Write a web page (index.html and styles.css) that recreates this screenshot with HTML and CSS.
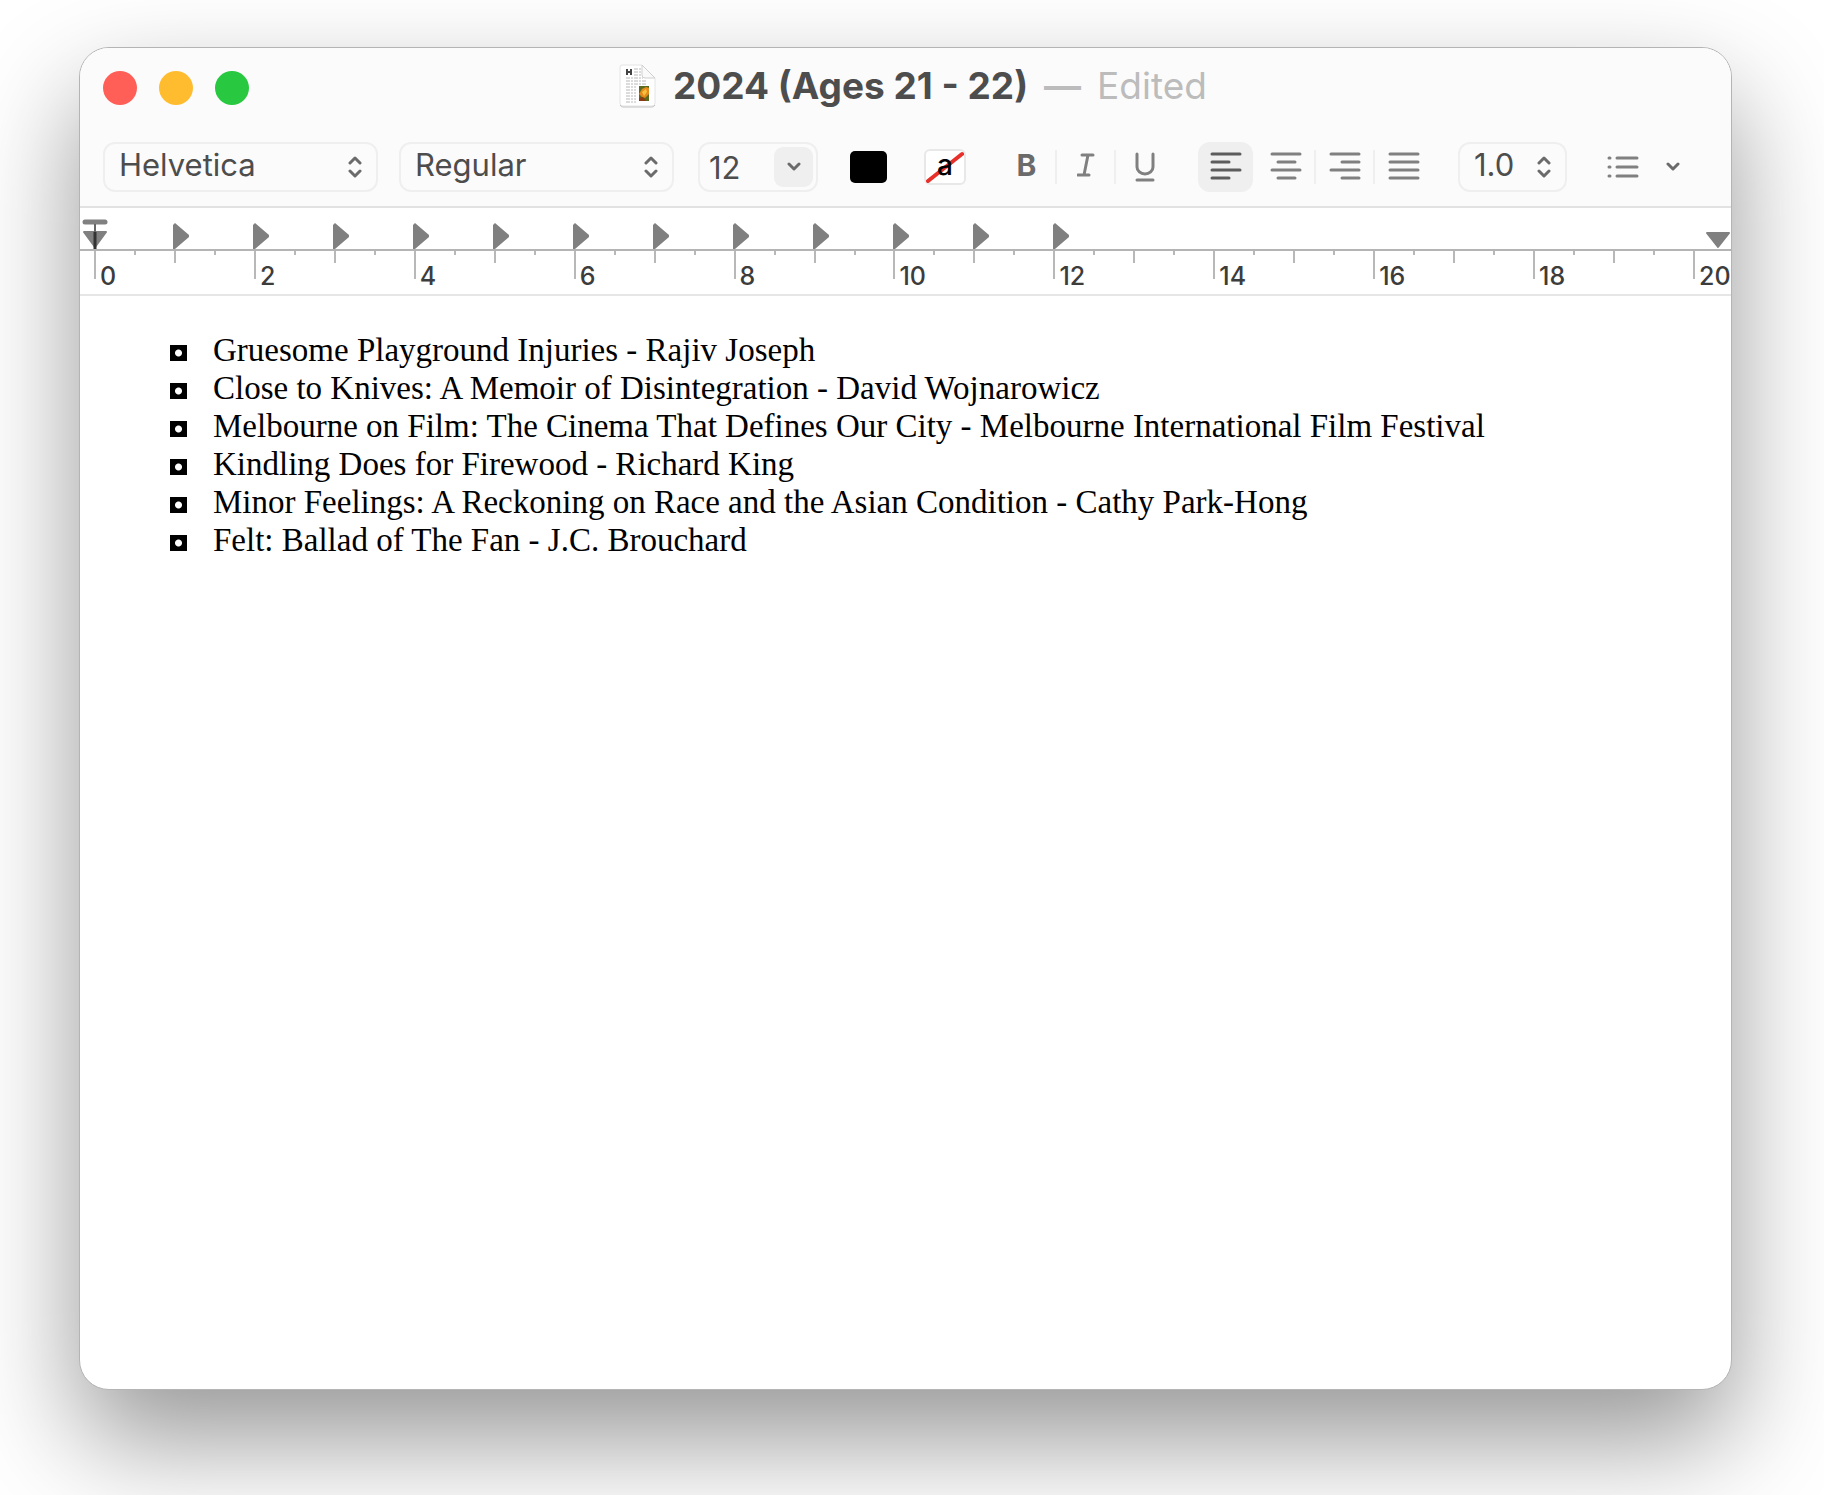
FILE: index.html
```html
<!DOCTYPE html>
<html lang="en">
<head>
    <meta charset="UTF-8">
    <meta name="viewport" content="width=device-width, initial-scale=1.0">
    <title>2024 (Ages 21 - 22)</title>
    <link rel="stylesheet" href="styles.css">
</head>
<body>
    <main class="window">
        <header class="titlebar">
            <div class="lights">
                <button type="button" class="light close" aria-label="Close"></button>
                <button type="button" class="light minimize" aria-label="Minimize"></button>
                <button type="button" class="light zoom" aria-label="Zoom"></button>
            </div>
            <div class="title">
                <svg class="doc-icon" width="38" height="44" viewBox="0 0 38 44" aria-hidden="true">
                    <path d="M3 1h20l13 13v25a3 3 0 0 1-3 3H4a3 3 0 0 1-3-3V3a2 2 0 0 1 2-2z" fill="#fff" stroke="#e4e4e4"/>
                    <path d="M1 41q1 2 3 2h29q2 0 3-2" fill="none" stroke="#c4c4c4"/>
                    <path d="M8 5v6M12 5v6M8 8h4" stroke="#444" stroke-width="2"/>
                    <path d="M15 5h8M15 8h8M15 11h8M7 14h17M7 17h20M7 20h20M7 23h10M7 26h10M7 29h10M7 32h10M7 35h10M7 38h10" stroke="#b8b8b8" stroke-dasharray="4 1 2 1"/>
                    <path d="M23 1v10a3 3 0 0 0 3 3h10z" fill="#fafafa" stroke="#cfcfcf"/>
                    <path d="M20 22h10v15H20z" fill="#5c6a1e"/>
                    <path d="M20 30l3-5 4-2 3 1v6l-4 4-3-1z" fill="#e58a1c"/>
                    <path d="M23 28l4-3 1 3-3 4z" fill="#f7c13c"/>
                    <path d="M20 34l4-1 3 4h-7z" fill="#8d3a12"/>
                </svg>
                <h1>2024 (Ages 21 - 22)</h1>
                <span class="edited"><b>—</b> <span>Edited</span></span>
            </div>
        </header>

        <div class="toolbar">
            <label class="picker family">
                <select aria-label="Font family"><option>Helvetica</option></select>
                <svg class="arrows" width="14" height="24" viewBox="0 0 14 24"><path d="M2 8l5-5 5 5M2 16l5 5 5-5"/></svg>
            </label>
            <label class="picker typeface">
                <select aria-label="Typeface"><option>Regular</option></select>
                <svg class="arrows" width="14" height="24" viewBox="0 0 14 24"><path d="M2 8l5-5 5 5M2 16l5 5 5-5"/></svg>
            </label>
            <div class="size">
                <input type="text" value="12" aria-label="Font size">
                <button type="button" aria-label="Choose font size">
                    <svg width="14" height="10" viewBox="0 0 14 10"><path d="M2 2l5 5 5-5"/></svg>
                </button>
            </div>
            <button type="button" class="swatch" aria-label="Text color"></button>
            <button type="button" class="highlight" aria-label="Highlight color">
                <svg width="38" height="32" viewBox="0 0 38 32"><path d="M2 30L36 3"/></svg>
                <span>a</span>
            </button>
            <div class="group styles">
                <button type="button" class="bold">B</button>
                <button type="button" aria-label="Italic">
                    <svg width="18" height="28" viewBox="0 0 18 28"><path d="M5 2h11M1 22h11M11 2L7 22"/></svg>
                </button>
                <button type="button" aria-label="Underline">
                    <svg width="20" height="30" viewBox="0 0 20 30"><path d="M2 2v13a8 7 0 0 0 16 0V2M2 28h16"/></svg>
                </button>
            </div>
            <div class="group align">
                <button type="button" class="active" aria-label="Align left">
                    <svg width="32" height="30" viewBox="0 0 32 30"><path d="M2 2h28M2 10h17M2 18h28M2 26h17"/></svg>
                </button>
                <button type="button" aria-label="Center">
                    <svg width="32" height="30" viewBox="0 0 32 30"><path d="M2 2h28M8 10h17M2 18h28M8 26h17"/></svg>
                </button>
                <button type="button" aria-label="Align right">
                    <svg width="32" height="30" viewBox="0 0 32 30"><path d="M2 2h28M13 10h17M2 18h28M13 26h17"/></svg>
                </button>
                <button type="button" aria-label="Justify">
                    <svg width="32" height="30" viewBox="0 0 32 30"><path d="M2 2h28M2 10h28M2 18h28M2 26h28"/></svg>
                </button>
            </div>
            <label class="picker spacing">
                <select aria-label="Line spacing"><option>1.0</option></select>
                <svg class="arrows" width="14" height="24" viewBox="0 0 14 24"><path d="M2 8l5-5 5 5M2 16l5 5 5-5"/></svg>
            </label>
            <button type="button" class="lists" aria-label="List style">
                <svg width="32" height="24" viewBox="0 0 32 24"><path d="M2 3h1M10 3h20M2 12h1M10 12h20M2 21h1M10 21h20"/></svg>
                <svg class="chevron" width="14" height="10" viewBox="0 0 14 10"><path d="M2 2l5 5 5-5"/></svg>
            </button>
        </div>

        <div class="ruler">
            <div class="stops">
                <svg class="indent" width="26" height="30" viewBox="0 0 26 30">
                    <path d="M3 3h20" stroke="#808080" stroke-width="5" stroke-linecap="round"/>
                    <path d="M2 13h22L13 28z" fill="#808080" stroke="#808080" stroke-width="2" stroke-linejoin="round"/>
                    <path d="M13 5v8" stroke="#666" stroke-width="2"/>
                    <path d="M13 13v17" stroke="#333" stroke-width="3"/>
                </svg>
                <div class="tabs">
                    <i></i><i></i><i></i><i></i><i></i><i></i><i></i><i></i><i></i><i></i><i></i><i></i>
                </div>
                <svg class="margin" width="26" height="18" viewBox="0 0 26 18"><path d="M2 2h22L13 16z" fill="#808080" stroke="#808080" stroke-width="2" stroke-linejoin="round"/></svg>
            </div>
            <div class="scale">
                <span>0</span>
                <span>2</span>
                <span>4</span>
                <span>6</span>
                <span>8</span>
                <span>10</span>
                <span>12</span>
                <span>14</span>
                <span>16</span>
                <span>18</span>
                <span>20</span>
            </div>
        </div>

        <article class="page">
            <ul>
                <li>Gruesome Playground Injuries - Rajiv Joseph</li>
                <li>Close to Knives: A Memoir of Disintegration - David Wojnarowicz</li>
                <li>Melbourne on Film: The Cinema That Defines Our City - Melbourne International Film Festival</li>
                <li>Kindling Does for Firewood - Richard King</li>
                <li>Minor Feelings: A Reckoning on Race and the Asian Condition - Cathy Park-Hong</li>
                <li>Felt: Ballad of The Fan - J.C. Brouchard</li>
            </ul>
        </article>
    </main>
</body>
</html>
```
FILE: styles.css
```css
* {
    box-sizing: border-box;
}
body {
    margin: 0;
    min-height: 100vh;
    padding: 47px 92px 105px 79px;
    display: flex;
    background: #fff;
    font-family: Inter, "Liberation Sans", sans-serif;
    color: #4d4d4d;
    overflow-x: hidden;
}
button, select, input {
    font: inherit;
    color: inherit;
    background: none;
    border: 0;
    padding: 0;
    margin: 0;
}
svg {
    display: block;
    flex: none;
}

/* Window */
.window {
    flex: 1;
    min-width: 0;
    display: flex;
    flex-direction: column;
    background: #fff;
    border: 1px solid #b4b4b4;
    border-radius: 30px;
    overflow: hidden;
    box-shadow: 0 50px 110px rgba(0,0,0,0.41);
}
.titlebar {
    display: grid;
    grid-template-columns: 1fr auto 1fr;
    align-items: center;
    height: 80px;
    padding-left: 23px;
    background: #fbfbfb;
}
.lights {
    display: flex;
    gap: 22px;
}
.light {
    width: 34px;
    height: 34px;
    border-radius: 50%;
}
.close { background: #ff5f57; }
.minimize { background: #febc2e; }
.zoom { background: #28c840; }
.title {
    display: flex;
    align-items: center;
    gap: 16px;
    padding: 0 8px 4px 0;
    font-size: 37px;
    line-height: 44px;
    white-space: nowrap;
}
.title h1 {
    margin: 0;
    font-size: 37px;
    font-weight: 700;
}
.edited {
    display: flex;
    gap: 16px;
    color: #bcbcbc;
}
.edited b {
    font-weight: 600;
}

/* Toolbar */
.toolbar {
    display: flex;
    align-items: center;
    padding: 14px 23px;
    background: #fbfbfb;
    border-bottom: 2px solid #e2e2e2;
    font-size: 31px;
}
.toolbar svg {
    fill: none;
    stroke: #6b6b6b;
    stroke-width: 3;
    stroke-linecap: round;
    stroke-linejoin: round;
}
.picker {
    display: flex;
    align-items: center;
    height: 50px;
    padding-right: 14px;
    border: 2px solid #efefef;
    border-radius: 12px;
}
.picker select {
    appearance: none;
    flex: 1;
    min-width: 0;
    height: 46px;
    padding: 0 0 5px 14px;
}
.family {
    width: 275px;
    margin-right: 21px;
}
.typeface {
    width: 275px;
    margin-right: 24px;
}
.size {
    display: flex;
    width: 120px;
    height: 50px;
    padding: 3px;
    border: 2px solid #efefef;
    border-radius: 12px;
    margin-right: 32px;
}
.size input {
    flex: 1;
    min-width: 0;
    padding-left: 6px;
}
.size button {
    display: flex;
    align-items: center;
    justify-content: center;
    width: 39px;
    border-radius: 9px;
    background: #efefef;
}
.swatch {
    width: 37px;
    height: 32px;
    margin-right: 37px;
    border-radius: 5px;
    background: #000;
}
.highlight {
    display: grid;
    place-items: center;
    width: 42px;
    height: 36px;
    margin-right: 30px;
    border: 2px solid #e8e8e8;
    border-radius: 6px;
    background: #fff;
    color: #000;
    font-size: 28px;
    font-weight: 500;
    line-height: 28px;
}
.highlight svg, .highlight span {
    grid-area: 1 / 1;
}
.highlight span {
    padding-bottom: 4px;
}
.toolbar .highlight svg {
    stroke: #e8302a;
    stroke-width: 4;
}
.group {
    display: flex;
    align-items: center;
}
.group button {
    display: flex;
    align-items: center;
    justify-content: center;
    width: 59px;
    height: 34px;
    border-left: 2px solid #efefef;
}
.group button:first-child {
    border-left-color: transparent;
}
.toolbar .group svg, .toolbar .lists svg {
    stroke: #808080;
}
.styles {
    margin-right: 25px;
}
.group .bold {
    padding-bottom: 5px;
    color: #6b6b6b;
    font-weight: 700;
    font-size: 30px;
}
.align {
    margin-right: 26px;
}
.group .active {
    width: 55px;
    height: 50px;
    margin-right: 2px;
    border: 0;
    border-radius: 12px;
    background: #efefef;
}
.group .active + button {
    border-left-color: transparent;
}
.toolbar .group .active svg {
    stroke: #5c5c5c;
}
.spacing {
    width: 109px;
    margin-right: 40px;
}
.lists {
    display: flex;
    align-items: center;
    gap: 27px;
}
.toolbar .lists .chevron {
    stroke: #6b6b6b;
}

/* Ruler */
.ruler {
    overflow: hidden;
    border-bottom: 2px solid #e6e6e6;
}
.stops {
    display: flex;
    align-items: flex-end;
    height: 43px;
    border-bottom: 2px solid #b4b4b4;
    padding-left: 2px;
}
.tabs {
    display: flex;
    flex: 1;
    padding-left: 65px;
}
.tabs i {
    width: 80px;
    height: 26px;
    background: #808080;
    clip-path: polygon(0 2px, 2px 0, 16px 12px, 16px 14px, 2px 26px, 0 26px);
}
.scale {
    display: grid;
    grid-template-columns: repeat(10, 1fr) 38px;
    margin-left: 14px;
    height: 43px;
    color: #3c3c3c;
    font-size: 25px;
    font-weight: 500;
    line-height: 30px;
}
/* one cell spans two units: long tick, short, medium, short */
.scale span {
    padding: 10px 0 0 6px;
    background:
        linear-gradient(#b8b8b8, #b8b8b8) 0 0 / 2px 28px no-repeat,
        linear-gradient(#b8b8b8, #b8b8b8) 40px 0 / 2px 4px no-repeat,
        linear-gradient(#b8b8b8, #b8b8b8) 80px 0 / 2px 12px no-repeat,
        linear-gradient(#b8b8b8, #b8b8b8) 120px 0 / 2px 4px no-repeat;
}

/* Document */
.page {
    flex: 1;
    padding: 35px 90px;
    color: #000;
    font-family: "Liberation Serif", "Times New Roman", serif;
    font-size: 33px;
    line-height: 38px;
}
.page ul {
    list-style: none;
    margin: 0;
    padding: 0;
}
.page li {
    display: flex;
    align-items: baseline;
    gap: 26px;
}
.page li::before {
    content: "";
    flex: none;
    width: 17px;
    height: 16px;
    background: radial-gradient(circle, #fff 3px, #000 4px);
}
```
